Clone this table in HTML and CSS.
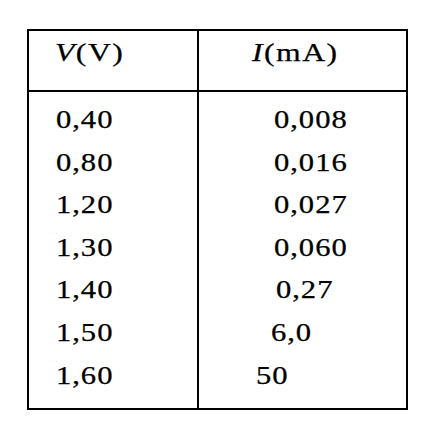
FILE: index.html
```html
<!DOCTYPE html>
<html>
<head>
<meta charset="utf-8">
<link rel="stylesheet" href="styles.css">
</head>
<body>
<table class="tbl">
  <thead>
    <tr>
      <th class="c1"><span class="n"><i>V</i>(V)</span></th>
      <th class="c2"><span class="n"><i>I</i>(mA)</span></th>
    </tr>
  </thead>
  <tbody>
    <tr class="first"><td class="c1"><span class="n">0,40</span></td><td class="c2"><span class="n">0,008</span></td></tr>
    <tr><td class="c1"><span class="n">0,80</span></td><td class="c2"><span class="n">0,016</span></td></tr>
    <tr><td class="c1"><span class="n">1,20</span></td><td class="c2"><span class="n">0,027</span></td></tr>
    <tr><td class="c1"><span class="n">1,30</span></td><td class="c2"><span class="n">0,060</span></td></tr>
    <tr><td class="c1"><span class="n">1,40</span></td><td class="c2 s2"><span class="n">0,27</span></td></tr>
    <tr><td class="c1"><span class="n">1,50</span></td><td class="c2 s3"><span class="n">6,0</span></td></tr>
    <tr class="last"><td class="c1"><span class="n">1,60</span></td><td class="c2 s4"><span class="n">50</span></td></tr>
  </tbody>
</table>
</body>
</html>
```
FILE: styles.css
```css
html, body {
  margin: 0;
  padding: 0;
  background: #fff;
}
body {
  font-family: "Liberation Serif", "Times New Roman", serif;
  color: #000;
}
.tbl {
  margin: 29px 0 0 27px;
  width: 381px;
  border-collapse: collapse;
  border: 2px solid #000;
  table-layout: fixed;
}
.tbl th, .tbl td {
  padding: 0;
  text-align: left;
  font-weight: normal;
  white-space: nowrap;
}
.n {
  display: inline-block;
  transform: scaleX(1.2);
  transform-origin: left center;
  -webkit-text-stroke: 0.25px #000;
  letter-spacing: 0.8px;
}
.tbl th {
  font-size: 26px;
  height: 61px;
  line-height: 30px;
  vertical-align: top;
  padding-top: 7px;
  box-sizing: border-box;
  border-bottom: 2px solid #000;
}
.tbl th .n {
  transform: scaleX(1.22);
  letter-spacing: 1.2px;
}
.tbl th.c1 { padding-left: 26px; }
.tbl th.c2 { padding-left: 53px; }
.tbl .c1 {
  width: 170px;
  border-right: 2px solid #000;
}
.tbl td {
  font-size: 25.5px;
  line-height: 42.6px;
}
.tbl td.c1 { padding-left: 27px; }
.tbl td.c2 { padding-left: 75px; }
.tbl td.s2 { padding-left: 77px; }
.tbl td.s3 { padding-left: 72px; }
.tbl td.s4 { padding-left: 57px; }
.tbl tr.first td { padding-top: 7px; }
.tbl tr.last td { padding-bottom: 11px; }
```
